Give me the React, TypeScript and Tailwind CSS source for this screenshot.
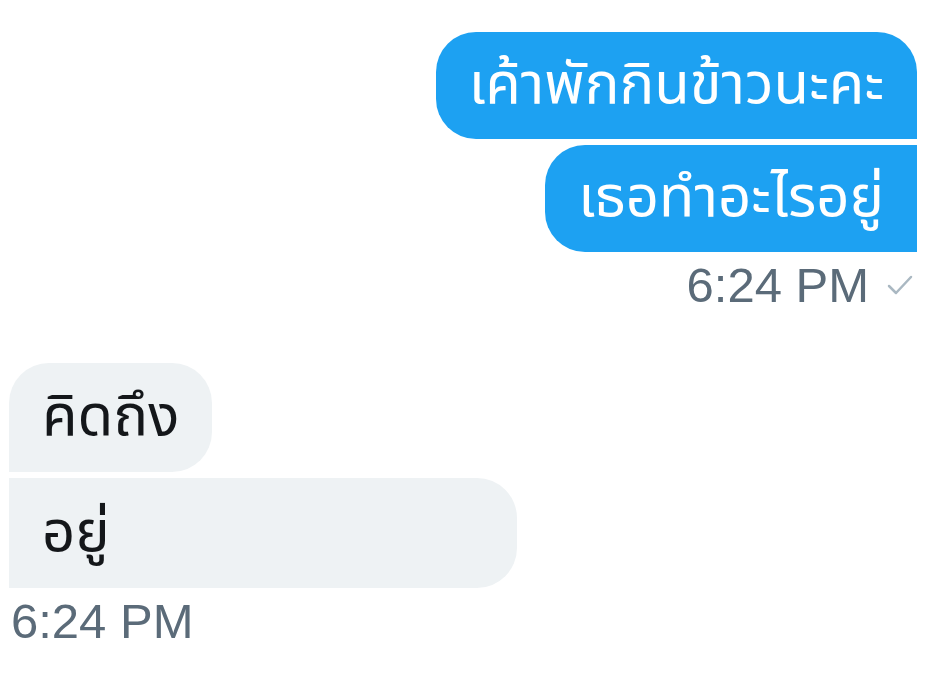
export default function App() {
  const thai = { fontFamily: '"Noto Sans Thai", "Noto Sans", "DejaVu Sans", sans-serif' };
  return (
    <main className="w-[949px] h-[681px] bg-white overflow-hidden" style={{ fontFamily: '"Liberation Sans", Arial, sans-serif' }}>
      {/* sent */}
      <div className="flex flex-col items-end pt-[32px] pr-[32px]">
        <div
          className="h-[107px] flex items-center px-[33px] bg-[#1da1f2] text-white text-[58px] rounded-l-[40px] rounded-tr-[40px]"
          style={thai}
        >
          เค้าพักกินข้าวนะคะ
        </div>
        <div
          className="mt-[6px] h-[107px] flex items-center px-[33px] bg-[#1da1f2] text-white text-[58px] rounded-l-[40px]"
          style={thai}
        >
          เธอทำอะไรอยู่
        </div>
        <div className="mt-[8px] flex items-center gap-[18px] text-[#5b6b79] text-[49px] leading-[50px]">
          <span>6:24 PM</span>
          <svg width="26" height="22" viewBox="0 0 26 22" className="mr-[4px]">
            <path d="M2 12 L9 19 L24 3" fill="none" stroke="#aab8c2" strokeWidth="2.5" strokeLinecap="round" strokeLinejoin="round" />
          </svg>
        </div>
      </div>

      {/* received */}
      <div className="flex flex-col items-start pt-[53px] pl-[9px]">
        <div
          className="h-[109px] flex items-center px-[33px] bg-[#eef2f4] text-[#14171a] text-[58px] rounded-r-[40px] rounded-tl-[40px]"
          style={thai}
        >
          คิดถึง
        </div>
        <div
          className="mt-[6px] w-[508px] h-[110px] flex items-center px-[33px] bg-[#eef2f4] text-[#14171a] text-[58px] rounded-r-[40px]"
          style={thai}
        >
          อยู่
        </div>
        <div className="mt-[8px] ml-[2px] text-[#5b6b79] text-[49px] leading-[50px]">6:24 PM</div>
      </div>
    </main>
  );
}
